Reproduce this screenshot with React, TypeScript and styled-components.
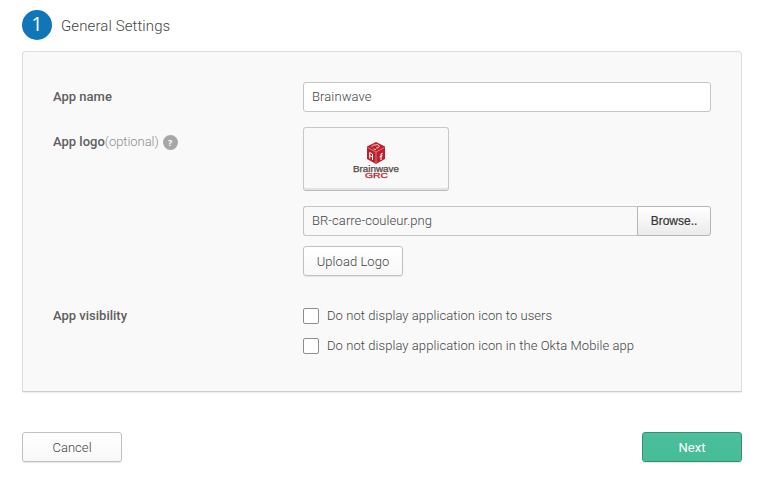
import React from "react";
import styled, { createGlobalStyle } from "styled-components";

const GlobalStyle = createGlobalStyle`
  *, *::before, *::after { box-sizing: border-box; }
  body { margin: 0; background: #fff; color: #444; font: 300 13px/20px Roboto, sans-serif; }
  button, input { font: inherit; color: inherit; letter-spacing: inherit; }
`;

const Page = styled.main`
  width: 763px;
  height: 485px;
  padding: 10px 21px 0 22px;
  overflow: hidden;
`;

const StepHeader = styled.header`
  display: flex;
  align-items: center;
  height: 30px;
  gap: 9px;
`;

const StepNumber = styled.span`
  width: 30px;
  height: 30px;
  border-radius: 50%;
  background: #1076b8;
  color: #fff;
  font: 20px/28px "Open Sans", sans-serif;
  text-align: center;
`;

const Title = styled.h1`
  margin: 2px 0 0;
  font-size: 15px;
  font-weight: 300;
  letter-spacing: 0.1px;
`;

const Panel = styled.section`
  height: 341px;
  margin-top: 11px;
  padding: 30px;
  background: #f9f9f9;
  border: 1px solid #ddd;
  border-bottom-color: #ccc;
  border-radius: 4px 4px 0 0;
  box-shadow: 0 1px 1px #eee;
`;

const Field = styled.div<{ $gap?: number }>`
  display: grid;
  grid-template-columns: 250px 408px;
  margin-bottom: ${(p) => p.$gap ?? 15}px;
`;

const Label = styled.div<{ $top?: number }>`
  display: flex;
  align-items: center;
  height: 20px;
  margin-top: ${(p) => p.$top ?? 5}px;
  color: #5e5e5e;
  font-weight: 500;
  letter-spacing: 0;
`;

const Optional = styled.span`
  color: #8e8e8e;
  font-weight: 300;
  letter-spacing: -0.05px;
`;

const Help = styled.span`
  width: 15px;
  height: 15px;
  margin-left: 4px;
  border-radius: 50%;
  background: #a7a7a7;
  color: #fff;
  font: bold 9px/15px "Open Sans", sans-serif;
  text-align: center;
`;

const TextInput = styled.input`
  width: 408px;
  height: 30px;
  padding: 0 8px 1px;
  background: #fff;
  border: 1px solid #c5c5c5;
  border-radius: 3px;
  outline: none;
  letter-spacing: 0.1px;
`;

const LogoBox = styled.div`
  display: flex;
  justify-content: center;
  width: 146px;
  height: 64px;
  padding-top: 13px;
  border: 1px solid #c8c8c8;
  border-bottom-color: #bbb;
  border-radius: 3px;
  box-shadow: inset 0 -2px 0 #e3e3e3;
`;

const FilePicker = styled.div`
  display: flex;
  height: 30px;
  margin-top: 15px;
`;

const FileName = styled.div`
  flex: 1;
  padding: 4px 8px;
  border: 1px solid #c5c5c5;
  border-right: 0;
  border-radius: 3px 0 0 3px;
  letter-spacing: 0.05px;
`;

const Browse = styled.button`
  width: 74px;
  padding: 0;
  border: 1px solid #b5b5b5;
  border-radius: 0 3px 3px 0;
  background: linear-gradient(#fff, #ebebeb);
  color: #333;
  font: 12px "Liberation Sans", Arial, sans-serif;
  -webkit-text-stroke: 0.2px #333;
`;

const Button = styled.button<{ $primary?: boolean; $top?: number }>`
  display: block;
  width: 100px;
  height: 30px;
  margin-top: ${(p) => p.$top ?? 0}px;
  padding: 1px 0 0;
  border: 1px solid ${(p) => (p.$primary ? "#32916f" : "#c1c1c1")};
  border-radius: 3px;
  background: ${(p) => (p.$primary ? "linear-gradient(#4cbf9c, #46bc97)" : "linear-gradient(#fff, #f8f8f8)")};
  box-shadow: 0 1px 1px #e4e4e4;
  color: ${(p) => (p.$primary ? "#fff" : "#444")};
  font-weight: ${(p) => (p.$primary ? 400 : 300)};
  letter-spacing: 0.05px;
`;

const CheckRow = styled.label`
  display: flex;
  align-items: center;
  height: 20px;
  margin-bottom: 10px;
  gap: 8px;
  letter-spacing: 0.065px;
  white-space: nowrap;
`;

const Checkbox = styled.input`
  appearance: none;
  width: 16px;
  height: 16px;
  margin: 0;
  border: 1px solid #8e8e8e;
  border-radius: 2px;
  background: #fff;
`;

const Actions = styled.footer`
  display: flex;
  justify-content: space-between;
  margin-top: 40px;
`;

function BrainwaveLogo() {
  return (
    <svg width="50" height="40" viewBox="0 0 50 40" role="img" aria-label="Brainwave GRC">
      <path d="M25 1l9 4.5V18l-9 5-9-5V5.5z" fill="#be202b" />
      <path d="M16.5 6.5L25 11l8.5-4.5M25 11v11" fill="none" stroke="#e3a0a4" strokeWidth=".7" />
      <path d="M20.5 5.8l2-1.6 4-.5 2 1.3-1.2 1.6-2.2.5M22.5 8l2.5.6" fill="none" stroke="#fff" strokeWidth=".8" />
      <path d="M18.7 17.5v-6l2.8 1.5V19M18.7 14.5l2.8 1.5" fill="none" stroke="#fff" strokeWidth="1" />
      <path d="M31.8 12.3l-1.8.7v6M28.5 16l3-1.3" fill="none" stroke="#fff" strokeWidth="1" />
      <text x="2" y="30.5" textLength="46" lengthAdjust="spacingAndGlyphs" fontFamily="Liberation Sans" fontSize="8.5" fill="#554640" stroke="#554640" strokeWidth=".25">Brainwave</text>
      <text x="14" y="37" textLength="23" lengthAdjust="spacingAndGlyphs" fontFamily="Liberation Sans" fontSize="6.5" fill="#be202b" stroke="#be202b" strokeWidth=".25">GRC</text>
    </svg>
  );
}

export default function App() {
  return (
    <>
      <GlobalStyle />
      <Page>
        <StepHeader>
          <StepNumber>1</StepNumber>
          <Title>General Settings</Title>
        </StepHeader>
        <Panel>
          <Field>
            <Label>App name</Label>
            <TextInput defaultValue="Brainwave" aria-label="App name" />
          </Field>
          <Field $gap={30}>
            <Label>
              App logo<Optional>(optional)</Optional>
              <Help>?</Help>
            </Label>
            <div>
              <LogoBox><BrainwaveLogo /></LogoBox>
              <FilePicker>
                <FileName>BR-carre-couleur.png</FileName>
                <Browse>Browse..</Browse>
              </FilePicker>
              <Button $top={10}>Upload Logo</Button>
            </div>
          </Field>
          <Field>
            <Label $top={0}>App visibility</Label>
            <div>
              <CheckRow><Checkbox type="checkbox" />Do not display application icon to users</CheckRow>
              <CheckRow><Checkbox type="checkbox" />Do not display application icon in the Okta Mobile app</CheckRow>
            </div>
          </Field>
        </Panel>
        <Actions>
          <Button>Cancel</Button>
          <Button $primary>Next</Button>
        </Actions>
      </Page>
    </>
  );
}
